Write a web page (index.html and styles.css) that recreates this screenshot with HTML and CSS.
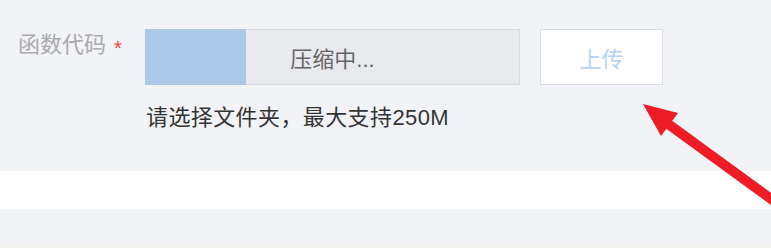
FILE: index.html
```html
<!DOCTYPE html>
<html lang="zh-CN">
<head>
    <meta charset="UTF-8">
    <meta name="viewport" content="width=device-width, initial-scale=1.0">
    <title>函数代码上传</title>
    <link rel="stylesheet" href="styles.css">
</head>
<body>
    <div class="page">
        <section class="form-panel">
            <div class="form-row">
                <label class="form-label">函数代码<span class="required">*</span></label>
                <div class="form-field">
                    <div class="upload-line">
                        <div class="progress">
                            <div class="progress-bar" style="width: 27%"></div>
                            <span class="progress-text">压缩中...</span>
                        </div>
                        <button class="btn upload" disabled>上传</button>
                    </div>
                    <p class="hint">请选择文件夹，最大支持250M</p>
                </div>
            </div>
        </section>
        <div class="white-band"></div>
        <div class="spacer"></div>
        <div class="footer-strip"></div>

        <!-- annotation arrow -->
        <svg class="arrow" width="771" height="248" viewBox="0 0 771 248">
            <line x1="664" y1="121" x2="800" y2="220" stroke="#ee1c24" stroke-width="10"/>
            <polygon points="643,104 678,113 661,136" fill="#ee1c24"/>
        </svg>
    </div>
</body>
</html>
```

FILE: styles.css
```css
* {
    margin: 0;
    padding: 0;
    box-sizing: border-box;
}

body {
    font-family: "Liberation Sans", "Noto Sans CJK SC", sans-serif;
    background: #f2f3f7;
    color: #333;
}

.page {
    position: relative;
    width: 771px;
    height: 248px;
    overflow: hidden;
}

.form-panel {
    height: 171px;
    padding-top: 29px;
}

.form-row {
    display: flex;
    align-items: flex-start;
}

.form-label {
    width: 145px;
    padding-left: 18px;
    font-size: 22px;
    line-height: 32px;
    color: #aaaaaa;
}

.required {
    color: #f5423f;
    font-size: 20px;
    margin-left: 8px;
    vertical-align: -3px;
}

.upload-line {
    display: flex;
    gap: 20px;
}

.progress {
    position: relative;
    width: 375px;
    height: 56px;
    border: 1px solid #d6dae1;
    background: #e8eaee;
    display: flex;
    align-items: center;
    justify-content: center;
}

.progress-bar {
    position: absolute;
    left: -1px;
    top: -1px;
    bottom: -1px;
    background: #abc8e8;
}

.progress-text {
    position: relative;
    font-size: 22px;
    color: #666;
}

.btn {
    width: 123px;
    height: 56px;
    font-family: inherit;
    font-size: 22px;
    background: #fff;
    border: 1px solid #d8dce3;
}

.upload {
    color: #b5d3f7;
}

.hint {
    margin-top: 17px;
    padding-left: 1px;
    font-size: 22px;
    line-height: 32px;
    letter-spacing: 0.4px;
    color: #333;
}

.white-band {
    height: 38px;
    background: #fff;
}

.spacer {
    height: 34px;
}

.footer-strip {
    height: 5px;
    background: #f3f2ee;
}

.arrow {
    position: absolute;
    left: 0;
    top: 0;
}
```
